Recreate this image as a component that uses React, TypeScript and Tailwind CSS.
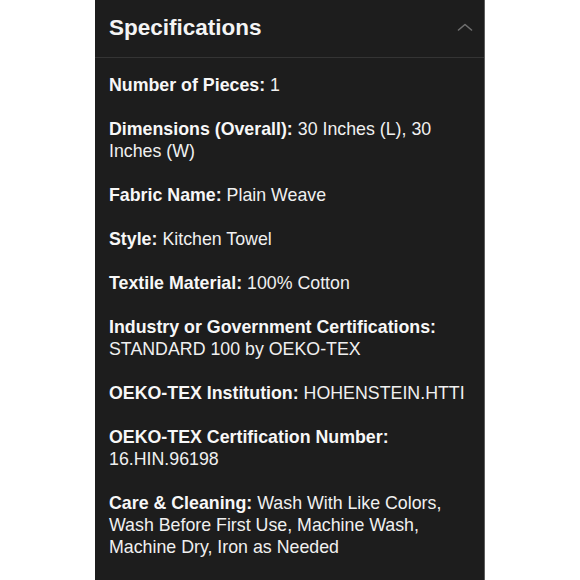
const specs: { label: string; value: string }[] = [
  { label: "Number of Pieces:", value: "1" },
  { label: "Dimensions (Overall):", value: "30 Inches (L), 30 Inches (W)" },
  { label: "Fabric Name:", value: "Plain Weave" },
  { label: "Style:", value: "Kitchen Towel" },
  { label: "Textile Material:", value: "100% Cotton" },
  { label: "Industry or Government Certifications:", value: "STANDARD 100 by OEKO-TEX" },
  { label: "OEKO-TEX Institution:", value: "HOHENSTEIN.HTTI" },
  { label: "OEKO-TEX Certification Number:", value: "16.HIN.96198" },
  {
    label: "Care & Cleaning:",
    value: "Wash With Like Colors, Wash Before First Use, Machine Wash, Machine Dry, Iron as Needed",
  },
];

export default function App() {
  return (
    <div className="flex h-[580px] w-[580px] justify-center overflow-hidden bg-white font-['Liberation_Sans',Arial,sans-serif]">
      <div className="h-full w-[390px] border-r border-[#5e5e5e] bg-[#1d1d1d]">
        <div className="flex items-center justify-between border-b border-[#343434] pb-[15px] pl-[14px] pr-[11px] pt-[14px]">
          <h2 className="text-[22.5px] font-bold leading-[28px] text-[#f4f4f4]">Specifications</h2>
          <svg width="16" height="8" viewBox="0 0 16 8" fill="none" className="mt-[-2px]">
            <path d="M1.5 7 L8 1.5 L14.5 7" stroke="#6f6f6f" strokeWidth="1.6" strokeLinecap="round" strokeLinejoin="round" />
          </svg>
        </div>
        <div className="pl-[14px] pr-[14px] pt-[16px]">
          {specs.map((s) => (
            <p key={s.label} className="mb-[22px] text-[17.8px] leading-[22px] text-[#f0f0f0]">
              <span className="font-bold text-[#f7f7f7]">{s.label}</span> {s.value}
            </p>
          ))}
        </div>
      </div>
    </div>
  );
}
